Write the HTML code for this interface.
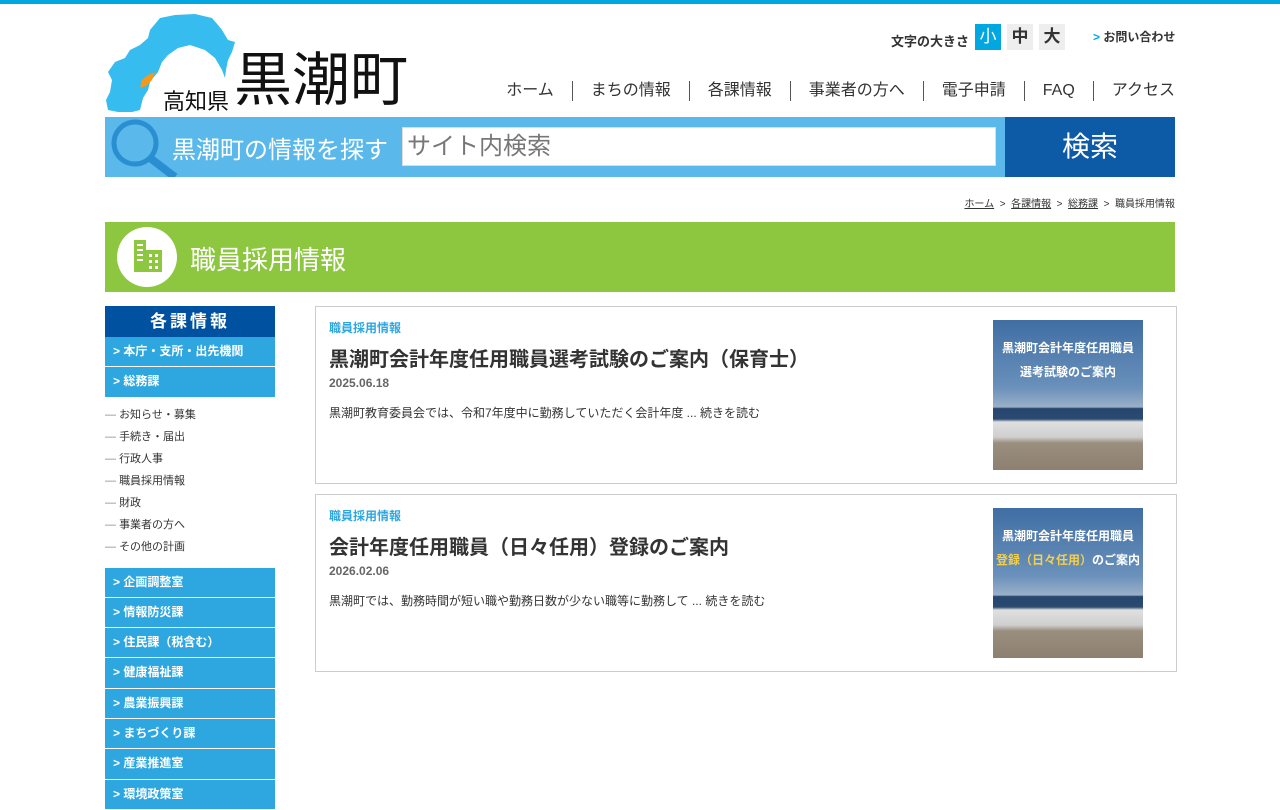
<!DOCTYPE html>
<html><head><meta charset="utf-8"><style>
*{margin:0;padding:0;box-sizing:border-box}
body{width:1280px;height:800px;overflow:hidden;background:#fff;font-family:"Liberation Sans","Noto Sans CJK JP",sans-serif;color:#333;position:relative}
.abs{position:absolute}
.topbar{left:0;top:0;width:1280px;height:4px;background:#00a7e1}
.nav{right:105px;top:81px;display:flex;font-size:16px;color:#333}
.nav span{padding:0 18px;border-left:1px solid #555;line-height:20px}
.nav span:first-child{border:none}
.nav span:last-child{padding-right:0}
.search{left:105px;top:117px;width:1070px;height:60px;background:#5bb8ea}
.side{left:105px;top:306px;width:170px}
.side .h{background:#0052a0;color:#fff;text-align:center;font-size:17px;letter-spacing:3px;height:31px;line-height:31px;font-weight:bold}
.side .b{background:#2ea7e0;color:#fff;font-size:12px;font-weight:bold;height:30.3px;line-height:29px;padding-left:8px;border-bottom:1px solid #fff}
.side .l{font-size:11px;color:#333;height:22px;line-height:22px}
.side .l:before{content:"— ";color:#888}
.card{left:315px;width:862px;height:178px;border:1px solid #ccc}
.card .c{position:absolute;left:13px;top:12px;font-size:12px;color:#2ea7e0;font-weight:bold}
.card .t{position:absolute;left:13px;top:36px;font-size:20px;font-weight:bold;color:#333}
.card .d{position:absolute;left:13px;top:69px;font-size:12px;color:#666;font-weight:bold}
.card .x{position:absolute;left:13px;top:97px;font-size:12px;color:#333}
.img{position:absolute;left:677px;top:13px;width:150px;height:150px;background:linear-gradient(#3f6ea3 0,#6a90bb 45%,#9ab0c8 58%,#27466e 59%,#2a4a70 66%,#e0e0e0 68%,#cfcfcf 78%,#9a8e7e 82%,#8d8070 100%)}
.img div{color:#fff;font-size:12px;font-weight:bold;text-align:center;line-height:24px;margin-top:16px;white-space:nowrap}
</style></head><body>
<div class="abs topbar"></div>
<svg class="abs" style="left:0;top:0" width="240" height="116" viewBox="0 0 240 116">
<path d="M150 30 L160 18 L175 15 L195 14 L212 18 L218 25 L222 30 L228 40 L235 42 L232 52 L228 60 L226 70 L225 78 L222 70 L215 58 L205 50 L190 45 L178 48 L168 55 L162 62 L158 72 L153 78 L150 82 L148 90 L143 98 L140 110 L132 112 L118 112 L108 110 L106 100 L110 92 L112 80 L108 72 L115 62 L125 58 L130 50 L140 45 L148 38 Z" fill="#36bcee"/>
<path d="M155 72 L152 80 L146 86 L140 88 L142 80 L148 75 Z" fill="#f39a1e"/>
</svg>
<div class="abs" style="left:163px;top:84px;font-size:22px;color:#111">高知県</div>
<div class="abs" style="left:234px;top:46px;font-size:58px;color:#111;line-height:70px">黒潮町</div>
<div class="abs" style="left:891px;top:31px;font-size:13px;font-weight:bold">文字の大きさ</div>
<div class="abs" style="left:975px;top:24px;width:26px;height:26px;background:#00a7e1;color:#fff;font-size:17px;text-align:center;line-height:26px">小</div>
<div class="abs" style="left:1007px;top:24px;width:26px;height:26px;background:#eee;color:#333;font-size:17px;text-align:center;line-height:26px;font-weight:bold">中</div>
<div class="abs" style="left:1039px;top:24px;width:26px;height:26px;background:#eee;color:#333;font-size:17px;text-align:center;line-height:26px;font-weight:bold">大</div>
<div class="abs" style="left:1093px;top:28px;font-size:12px;font-weight:bold"><span style="color:#00a7e1">&gt;</span> お問い合わせ</div>
<div class="abs nav"><span>ホーム</span><span>まちの情報</span><span>各課情報</span><span>事業者の方へ</span><span>電子申請</span><span>FAQ</span><span>アクセス</span></div>
<div class="abs search">
<svg class="abs" style="left:0;top:0" width="80" height="60"><circle cx="30" cy="26" r="21" fill="none" stroke="#2a8fd0" stroke-width="5"/><line x1="45" y1="41" x2="70" y2="60" stroke="#2a8fd0" stroke-width="8"/></svg>
<div class="abs" style="left:67px;top:13px;font-size:24px;color:#fff">黒潮町の情報を探す</div>
<div class="abs" style="left:297px;top:10px;width:594px;height:39px;background:#fff;border:1px solid #ddd;font-size:24px;color:#777;padding-left:4px;line-height:37px">サイト内検索</div>
<div class="abs" style="left:900px;top:0;width:170px;height:60px;background:#0d5aa7;color:#fff;font-size:28px;text-align:center;line-height:60px">検索</div>
</div>
<div class="abs" style="right:105px;top:195px;font-size:10px;color:#333"><u>ホーム</u> &nbsp;&gt;&nbsp; <u>各課情報</u> &nbsp;&gt;&nbsp; <u>総務課</u> &nbsp;&gt;&nbsp; 職員採用情報</div>
<div class="abs" style="left:105px;top:222px;width:1070px;height:70px;background:#8cc73f">
<div class="abs" style="left:12px;top:5px;width:60px;height:60px;border-radius:50%;background:#fff"></div>
<svg class="abs" style="left:27px;top:16px" width="32" height="36"><rect x="2" y="2" width="12" height="32" fill="#8cc73f"/><rect x="14" y="12" width="16" height="22" fill="#8cc73f"/><g fill="#fff"><rect x="5" y="6" width="6" height="2"/><rect x="5" y="11" width="6" height="2"/><rect x="5" y="16" width="6" height="2"/><rect x="5" y="21" width="6" height="2"/><rect x="17" y="16" width="3" height="3"/><rect x="23" y="16" width="3" height="3"/><rect x="17" y="22" width="3" height="3"/><rect x="23" y="22" width="3" height="3"/><rect x="17" y="28" width="3" height="3"/><rect x="23" y="28" width="3" height="3"/></g></svg>
<div class="abs" style="left:85px;top:18px;font-size:26px;color:#fff">職員採用情報</div>
</div>
<div class="abs side">
<div class="h">各課情報</div>
<div class="b">&gt; 本庁・支所・出先機関</div>
<div class="b">&gt; 総務課</div>
<div style="height:6px"></div>
<div class="l">お知らせ・募集</div><div class="l">手続き・届出</div><div class="l">行政人事</div><div class="l">職員採用情報</div><div class="l">財政</div><div class="l">事業者の方へ</div><div class="l">その他の計画</div>
<div style="height:10px"></div>
<div class="b">&gt; 企画調整室</div><div class="b">&gt; 情報防災課</div><div class="b">&gt; 住民課（税含む）</div><div class="b">&gt; 健康福祉課</div><div class="b">&gt; 農業振興課</div><div class="b">&gt; まちづくり課</div><div class="b">&gt; 産業推進室</div><div class="b">&gt; 環境政策室</div>
</div>
<div class="abs card" style="top:306px">
<div class="c">職員採用情報</div><div class="t">黒潮町会計年度任用職員選考試験のご案内（保育士）</div><div class="d">2025.06.18</div><div class="x">黒潮町教育委員会では、令和7年度中に勤務していただく会計年度 ... 続きを読む</div>
<div class="img"><div>黒潮町会計年度任用職員<br>選考試験のご案内</div></div>
</div>
<div class="abs card" style="top:494px">
<div class="c">職員採用情報</div><div class="t">会計年度任用職員（日々任用）登録のご案内</div><div class="d">2026.02.06</div><div class="x">黒潮町では、勤務時間が短い職や勤務日数が少ない職等に勤務して ... 続きを読む</div>
<div class="img"><div>黒潮町会計年度任用職員<br><span style="color:#f5d04a">登録（日々任用）</span>のご案内</div></div>
</div>
</body></html>
